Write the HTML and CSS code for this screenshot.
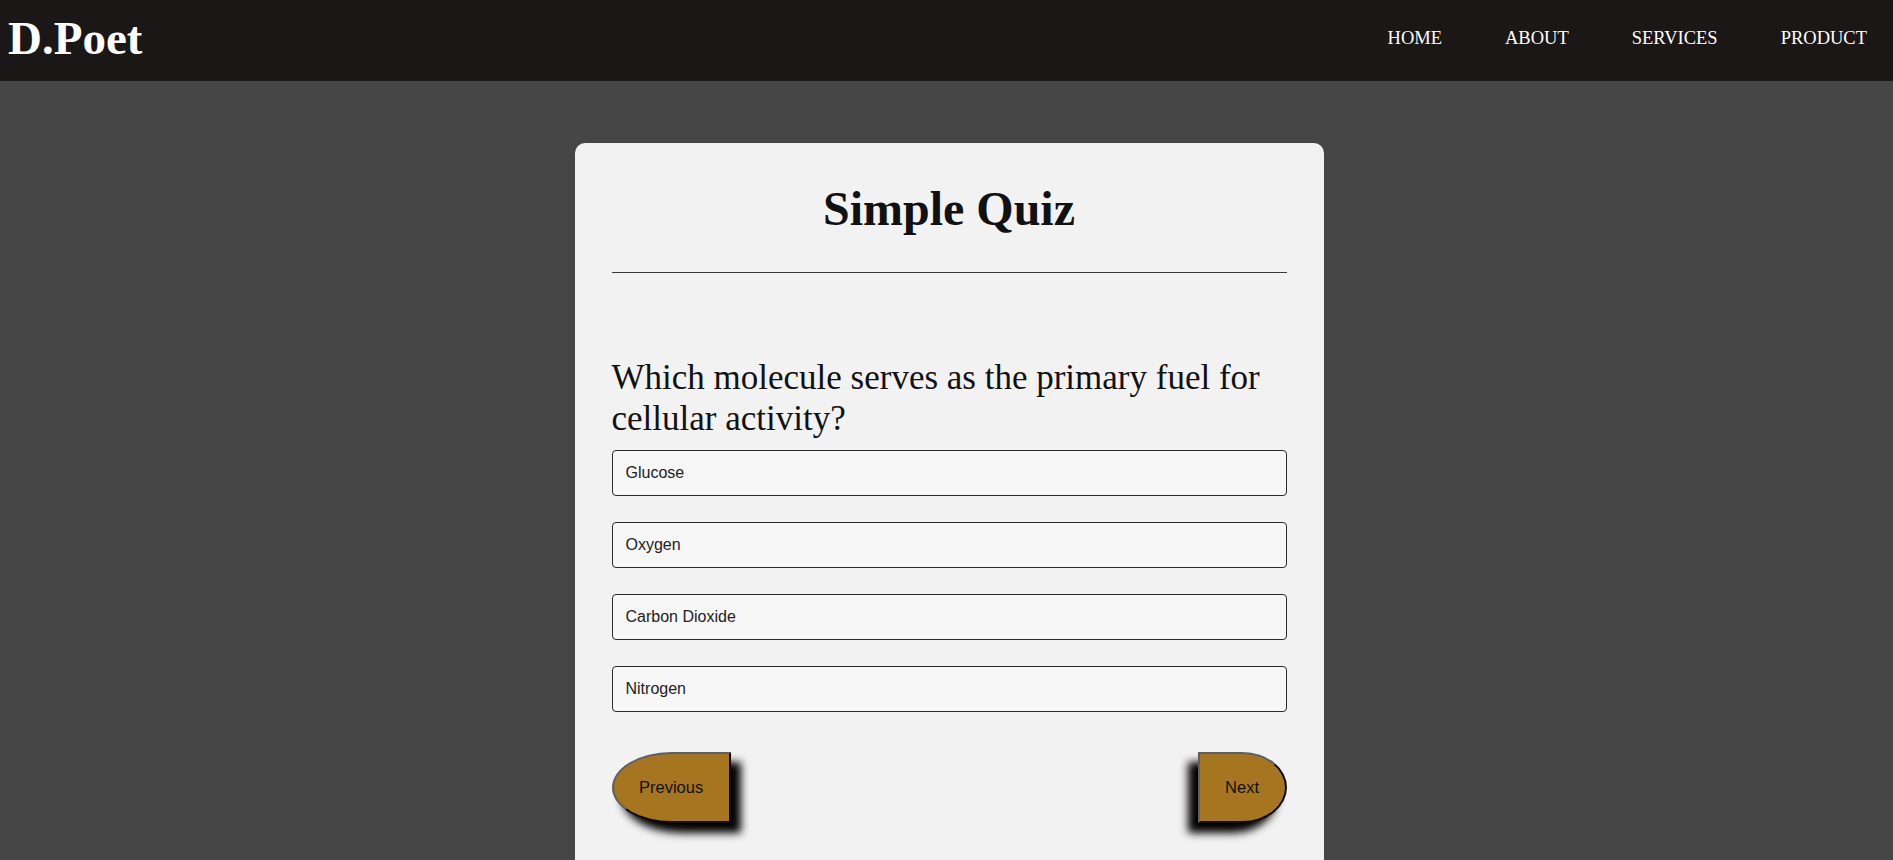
FILE: index.html
```html
<!DOCTYPE html>
<html lang="en">
<head>
<meta charset="utf-8">
<title>Simple Quiz</title>
<link rel="stylesheet" href="styles.css">
</head>
<body>
<header class="topbar">
  <div class="logo">D.Poet</div>
  <nav class="nav">
    <a href="#">HOME</a>
    <a href="#">ABOUT</a>
    <a href="#">SERVICES</a>
    <a href="#">PRODUCT</a>
  </nav>
</header>
<main class="main">
  <section class="card">
    <h1 class="title">Simple Quiz</h1>
    <div class="rule"></div>
    <h2 class="question">Which molecule serves as the primary fuel for cellular activity?</h2>
    <div class="options">
      <div class="option">Glucose</div>
      <div class="option">Oxygen</div>
      <div class="option">Carbon Dioxide</div>
      <div class="option">Nitrogen</div>
    </div>
    <div class="actions">
      <button class="btn btn-prev">Previous</button>
      <button class="btn btn-next">Next</button>
    </div>
  </section>
</main>
</body>
</html>
```

FILE: styles.css
```css
html, body {
  margin: 0;
  padding: 0;
  height: 860px;
  overflow: hidden;
}
body {
  background: #464646;
  font-family: "Liberation Serif", "Times New Roman", serif;
}
.topbar {
  height: 81px;
  background: #1b1716;
  display: flex;
  align-items: center;
  justify-content: space-between;
  padding: 0 26px 0 8px;
}
.logo {
  color: #fff;
  font-weight: bold;
  font-size: 47px;
  line-height: 1;
  margin-top: -4px;
}
.nav {
  display: flex;
  gap: 63px;
  margin-top: -5px;
}
.nav a {
  color: #fff;
  text-decoration: none;
  font-size: 18.5px;
}
.main {
  display: flex;
  justify-content: center;
  padding: 62px 0 0 5px;
}
.card {
  width: 675px;
  background: #f2f2f2;
  border-radius: 10px;
  padding: 38px 37px 80px;
}
.title {
  margin: 0;
  text-align: center;
  font-size: 48px;
  font-weight: bold;
  color: #111;
  line-height: 55px;
}
.rule {
  margin-top: 36px;
  border-top: 1px solid #3a3a3a;
}
.question {
  margin: 84px 0 11px;
  font-size: 35px;
  font-weight: normal;
  line-height: 41px;
  color: #111;
}
.options {
  display: flex;
  flex-direction: column;
  gap: 26px;
}
.option {
  height: 44px;
  border: 1px solid #2a2a2a;
  border-radius: 4px;
  background: #f7f7f7;
  display: flex;
  align-items: center;
  padding: 0 13px;
  font-family: "Liberation Sans", Arial, sans-serif;
  font-size: 16px;
  color: #222;
}
.actions {
  margin-top: 40px;
  display: flex;
  justify-content: space-between;
}
.btn {
  font-family: "Liberation Sans", Arial, sans-serif;
  font-size: 16.5px;
  line-height: 19px;
  padding: 24px 25.5px;
  background: #a5751f;
  color: #111;
  border: 2px outset #5f5f5f;
}
.btn-prev {
  border-radius: 50% 0 0 50%;
  box-shadow: 10px 10px 9px #000;
}
.btn-next {
  border-radius: 0 50% 50% 0;
  box-shadow: -10px 10px 9px #000;
}
```
